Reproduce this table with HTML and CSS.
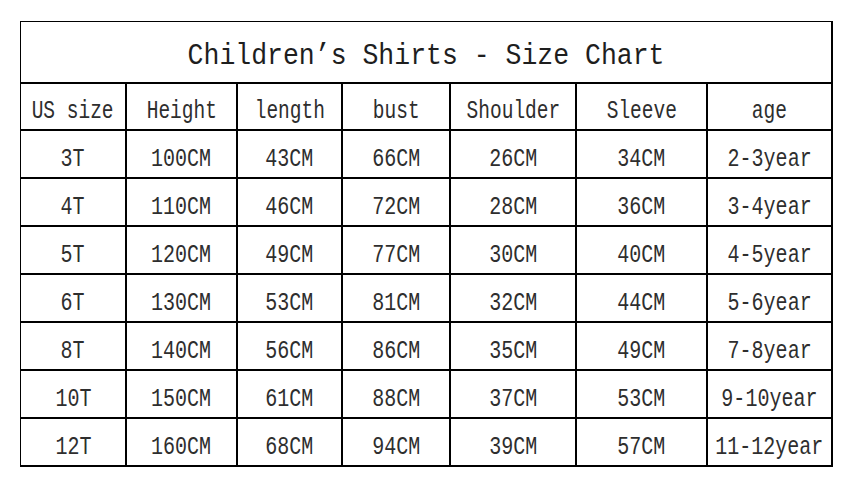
FILE: index.html
```html
<!DOCTYPE html>
<html lang="en">
<head>
<meta charset="utf-8">
<title>Children's Shirts - Size Chart</title>
<link rel="stylesheet" href="styles.css">
</head>
<body>
<div class="page">
  <div class="chart">
    <div class="cell title"><span class="txt">Children’s Shirts - Size Chart</span></div>

    <div class="cell head"><span class="txt">US size</span></div>
    <div class="cell head"><span class="txt">Height</span></div>
    <div class="cell head"><span class="txt">length</span></div>
    <div class="cell head"><span class="txt">bust</span></div>
    <div class="cell head"><span class="txt">Shoulder</span></div>
    <div class="cell head"><span class="txt">Sleeve</span></div>
    <div class="cell head"><span class="txt">age</span></div>

    <div class="cell"><span class="txt">3T</span></div>
    <div class="cell"><span class="txt">100CM</span></div>
    <div class="cell"><span class="txt">43CM</span></div>
    <div class="cell"><span class="txt">66CM</span></div>
    <div class="cell"><span class="txt">26CM</span></div>
    <div class="cell"><span class="txt">34CM</span></div>
    <div class="cell"><span class="txt">2-3year</span></div>

    <div class="cell"><span class="txt">4T</span></div>
    <div class="cell"><span class="txt">110CM</span></div>
    <div class="cell"><span class="txt">46CM</span></div>
    <div class="cell"><span class="txt">72CM</span></div>
    <div class="cell"><span class="txt">28CM</span></div>
    <div class="cell"><span class="txt">36CM</span></div>
    <div class="cell"><span class="txt">3-4year</span></div>

    <div class="cell"><span class="txt">5T</span></div>
    <div class="cell"><span class="txt">120CM</span></div>
    <div class="cell"><span class="txt">49CM</span></div>
    <div class="cell"><span class="txt">77CM</span></div>
    <div class="cell"><span class="txt">30CM</span></div>
    <div class="cell"><span class="txt">40CM</span></div>
    <div class="cell"><span class="txt">4-5year</span></div>

    <div class="cell"><span class="txt">6T</span></div>
    <div class="cell"><span class="txt">130CM</span></div>
    <div class="cell"><span class="txt">53CM</span></div>
    <div class="cell"><span class="txt">81CM</span></div>
    <div class="cell"><span class="txt">32CM</span></div>
    <div class="cell"><span class="txt">44CM</span></div>
    <div class="cell"><span class="txt">5-6year</span></div>

    <div class="cell"><span class="txt">8T</span></div>
    <div class="cell"><span class="txt">140CM</span></div>
    <div class="cell"><span class="txt">56CM</span></div>
    <div class="cell"><span class="txt">86CM</span></div>
    <div class="cell"><span class="txt">35CM</span></div>
    <div class="cell"><span class="txt">49CM</span></div>
    <div class="cell"><span class="txt">7-8year</span></div>

    <div class="cell"><span class="txt">10T</span></div>
    <div class="cell"><span class="txt">150CM</span></div>
    <div class="cell"><span class="txt">61CM</span></div>
    <div class="cell"><span class="txt">88CM</span></div>
    <div class="cell"><span class="txt">37CM</span></div>
    <div class="cell"><span class="txt">53CM</span></div>
    <div class="cell"><span class="txt">9-10year</span></div>

    <div class="cell"><span class="txt">12T</span></div>
    <div class="cell"><span class="txt">160CM</span></div>
    <div class="cell"><span class="txt">68CM</span></div>
    <div class="cell"><span class="txt">94CM</span></div>
    <div class="cell"><span class="txt">39CM</span></div>
    <div class="cell"><span class="txt">57CM</span></div>
    <div class="cell"><span class="txt">11-12year</span></div>
  </div>
</div>
</body>
</html>
```

FILE: styles.css
```css
html, body {
  margin: 0;
  padding: 0;
  background: #ffffff;
}

.page {
  padding: 21px 0 0 20px;
}

.chart {
  display: grid;
  width: 813px;
  box-sizing: border-box;
  grid-template-columns: 104px 109px 103px 106px 124px 129px 123px;
  grid-template-rows: 60px 45px repeat(7, 46px);
  gap: 2px;
  padding: 1px 2px 2px 1px;
  background: #000000;
  font-family: "Liberation Mono", "DejaVu Sans Mono", monospace;
  color: #2e2e2e;
}

.cell {
  background: #ffffff;
  display: flex;
  align-items: center;
  justify-content: center;
  padding-top: 9px;
  box-sizing: border-box;
  overflow: visible;
  font-size: 26px;
  line-height: 1;
}

.title {
  grid-column: 1 / -1;
  font-size: 30px;
  padding-top: 7px;
  color: #1e1e1e;
}

.txt {
  display: inline-block;
  white-space: nowrap;
  transform: scaleX(0.77);
  transform-origin: center;
}

.title .txt {
  transform: scaleX(0.883);
}

.head .txt {
  transform: scaleX(0.75);
}
```
